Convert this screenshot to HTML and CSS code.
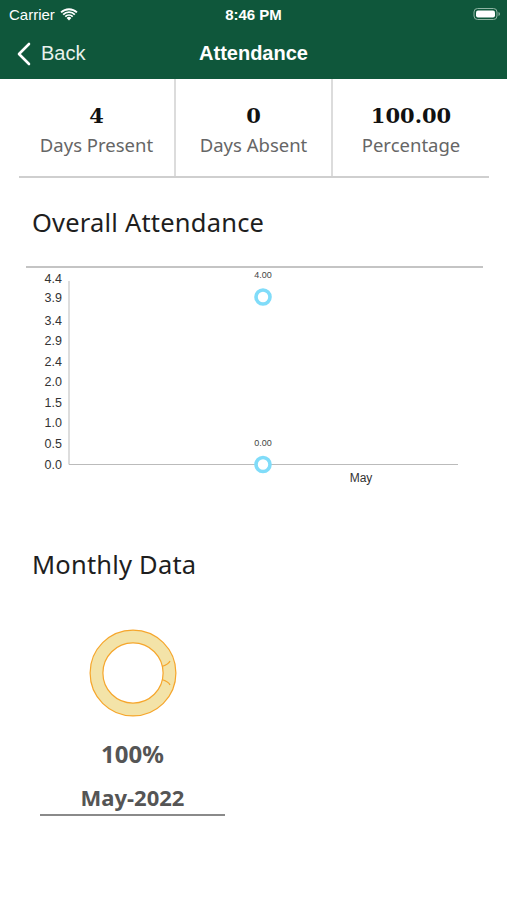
FILE: index.html
```html
<!DOCTYPE html>
<html lang="en">
<head>
    <meta charset="UTF-8">
    <meta name="viewport" content="width=device-width, initial-scale=1.0">
    <title>Attendance</title>
    <link rel="stylesheet" href="styles.css">
</head>
<body>
    <div class="header">
        <div class="status-bar">
            <div class="carrier">
                Carrier
                <svg class="wifi" width="18" height="13" viewBox="0 0 18 13">
                    <path d="M9 12.5 L6.6 10 A3.4 3.4 0 0 1 11.4 10 Z" fill="#fff"/>
                    <path d="M4.6 8 A6.3 6.3 0 0 1 13.4 8 L12.1 9.3 A4.5 4.5 0 0 0 5.9 9.3 Z" fill="#fff"/>
                    <path d="M2.5 5.9 A9.3 9.3 0 0 1 15.5 5.9 L14.2 7.2 A7.5 7.5 0 0 0 3.8 7.2 Z" fill="#fff"/>
                    <path d="M0.4 3.8 A12.3 12.3 0 0 1 17.6 3.8 L16.3 5.1 A10.5 10.5 0 0 0 1.7 5.1 Z" fill="#fff"/>
                </svg>
            </div>
            <div class="clock">8:46 PM</div>
            <div class="battery">
                <svg width="28" height="14" viewBox="0 0 28 14">
                    <rect x="1" y="1.5" width="23" height="11" rx="3.5" fill="none" stroke="#8fb5a3" stroke-width="1"/>
                    <rect x="3" y="3.5" width="19" height="7" rx="2" fill="#fff"/>
                    <path d="M25.5 5 Q27 5.5 27 7 Q27 8.5 25.5 9 Z" fill="#8fb5a3"/>
                </svg>
            </div>
        </div>
        <div class="nav-bar">
            <div class="back">
                <svg width="16" height="24" viewBox="0 0 16 24">
                    <path d="M13 2 L3 12 L13 22" fill="none" stroke="#fff" stroke-width="2.6" stroke-linecap="round" stroke-linejoin="round"/>
                </svg>
                <span>Back</span>
            </div>
            <div class="nav-title">Attendance</div>
        </div>
    </div>

    <div class="stats">
        <div class="stat">
            <div class="stat-value">4</div>
            <div class="stat-label">Days Present</div>
        </div>
        <div class="stat">
            <div class="stat-value">0</div>
            <div class="stat-label">Days Absent</div>
        </div>
        <div class="stat">
            <div class="stat-value">100.00</div>
            <div class="stat-label">Percentage</div>
        </div>
    </div>

    <div class="section-title">Overall Attendance</div>

    <!-- line chart -->
    <svg class="chart" width="507" height="245" viewBox="0 255 507 245">
        <line x1="26" y1="267" x2="483" y2="267" stroke="#c4c4c4" stroke-width="2"/>
        <g class="y-labels" font-size="12.5" fill="#333" text-anchor="end">
            <text x="62" y="282.5">4.4</text>
            <text x="62" y="302">3.9</text>
            <text x="62" y="324.5">3.4</text>
            <text x="62" y="345">2.9</text>
            <text x="62" y="365.5">2.4</text>
            <text x="62" y="386">2.0</text>
            <text x="62" y="406.5">1.5</text>
            <text x="62" y="427">1.0</text>
            <text x="62" y="447.5">0.5</text>
            <text x="62" y="468.5">0.0</text>
        </g>
        <line x1="69" y1="281" x2="69" y2="464.5" stroke="#bbb" stroke-width="1"/>
        <line x1="69" y1="464.5" x2="458" y2="464.5" stroke="#bbb" stroke-width="1"/>
        <text x="263" y="278" font-size="9" fill="#444" text-anchor="middle">4.00</text>
        <text x="263" y="446" font-size="9" fill="#444" text-anchor="middle">0.00</text>
        <circle cx="263" cy="297" r="7" fill="#fff" stroke="#80dcf9" stroke-width="3.6"/>
        <circle cx="263" cy="464.5" r="7" fill="#fff" stroke="#80dcf9" stroke-width="3.6"/>
        <text x="361" y="482" font-size="12" fill="#333" text-anchor="middle">May</text>
    </svg>

    <div class="section-title monthly-title">Monthly Data</div>

    <div class="month-card">
        <svg class="donut" width="90" height="90" viewBox="0 0 90 90">
            <circle cx="45" cy="45" r="36.5" fill="none" stroke="#f6a62c" stroke-width="14"/>
            <circle cx="45" cy="45" r="36.5" fill="none" stroke="#f3e3a8" stroke-width="11.6"/>
            <path d="M74 38.5 Q81 36 82 33" fill="none" stroke="#f6a62c" stroke-width="1.2"/>
            <path d="M74 51.5 Q81 54 82 57" fill="none" stroke="#f6a62c" stroke-width="1.2"/>
        </svg>
        <div class="month-pct">100%</div>
        <div class="month-name">May-2022</div>
    </div>
</body>
</html>
```

FILE: styles.css
```css
body {
    margin: 0;
    background: #fff;
    font-family: 'Noto Sans', 'Open Sans', sans-serif;
    color: #222;
}

.header {
    background: #0f573b;
    color: #fff;
    font-family: 'Liberation Sans', Arial, sans-serif;
}

.status-bar {
    height: 28px;
    display: flex;
    align-items: center;
    justify-content: space-between;
    padding: 0 6px 0 9px;
    position: relative;
    font-size: 15px;
}

.carrier {
    display: flex;
    align-items: center;
    gap: 5px;
}

.clock {
    position: absolute;
    left: 0;
    right: 0;
    text-align: center;
    font-weight: bold;
}

.battery svg {
    display: block;
}

.nav-bar {
    height: 51px;
    display: flex;
    align-items: center;
    position: relative;
}

.back {
    display: flex;
    align-items: center;
    gap: 9px;
    padding-left: 16px;
    font-size: 20px;
    color: #e8f2ed;
}

.back svg {
    display: block;
}

.nav-title {
    position: absolute;
    left: 0;
    right: 0;
    text-align: center;
    font-size: 20px;
    font-weight: bold;
    pointer-events: none;
}

/* summary row */
.stats {
    display: grid;
    grid-template-columns: 157px 157px 156px;
    margin: 0 18px 0 19px;
    height: 97px;
    border-bottom: 2px solid #cfcfcf;
}

.stat {
    display: flex;
    flex-direction: column;
    align-items: center;
    padding-top: 23px;
    border-right: 2px solid #dcdcdc;
}

.stat:last-child {
    border-right: none;
}

.stat-value {
    font-family: 'DejaVu Serif', 'Liberation Serif', serif;
    font-weight: bold;
    font-size: 21px;
    line-height: 28px;
    color: #111;
}

.stat-label {
    font-size: 18.5px;
    line-height: 30px;
    color: #666;
}

.section-title {
    font-size: 25.5px;
    letter-spacing: 0.2px;
    line-height: 30px;
    padding-left: 32px;
    margin-top: 29px;
    color: #1e1e1e;
}

.chart {
    display: block;
    margin-top: 18px;
    font-family: 'Liberation Sans', Arial, sans-serif;
}

.monthly-title {
    margin-top: 49px;
}

.month-card {
    width: 185px;
    margin: 49px 0 0 40px;
    padding-bottom: 2px;
    display: flex;
    flex-direction: column;
    align-items: center;
    border-bottom: 2px solid #8a8a8a;
}

.donut {
    display: block;
}

.month-pct {
    margin-top: 21px;
    font-size: 24px;
    line-height: 30px;
    font-weight: bold;
    color: #555;
}

.month-name {
    margin-top: 13px;
    font-size: 22px;
    line-height: 30px;
    font-weight: bold;
    color: #555;
}
```
